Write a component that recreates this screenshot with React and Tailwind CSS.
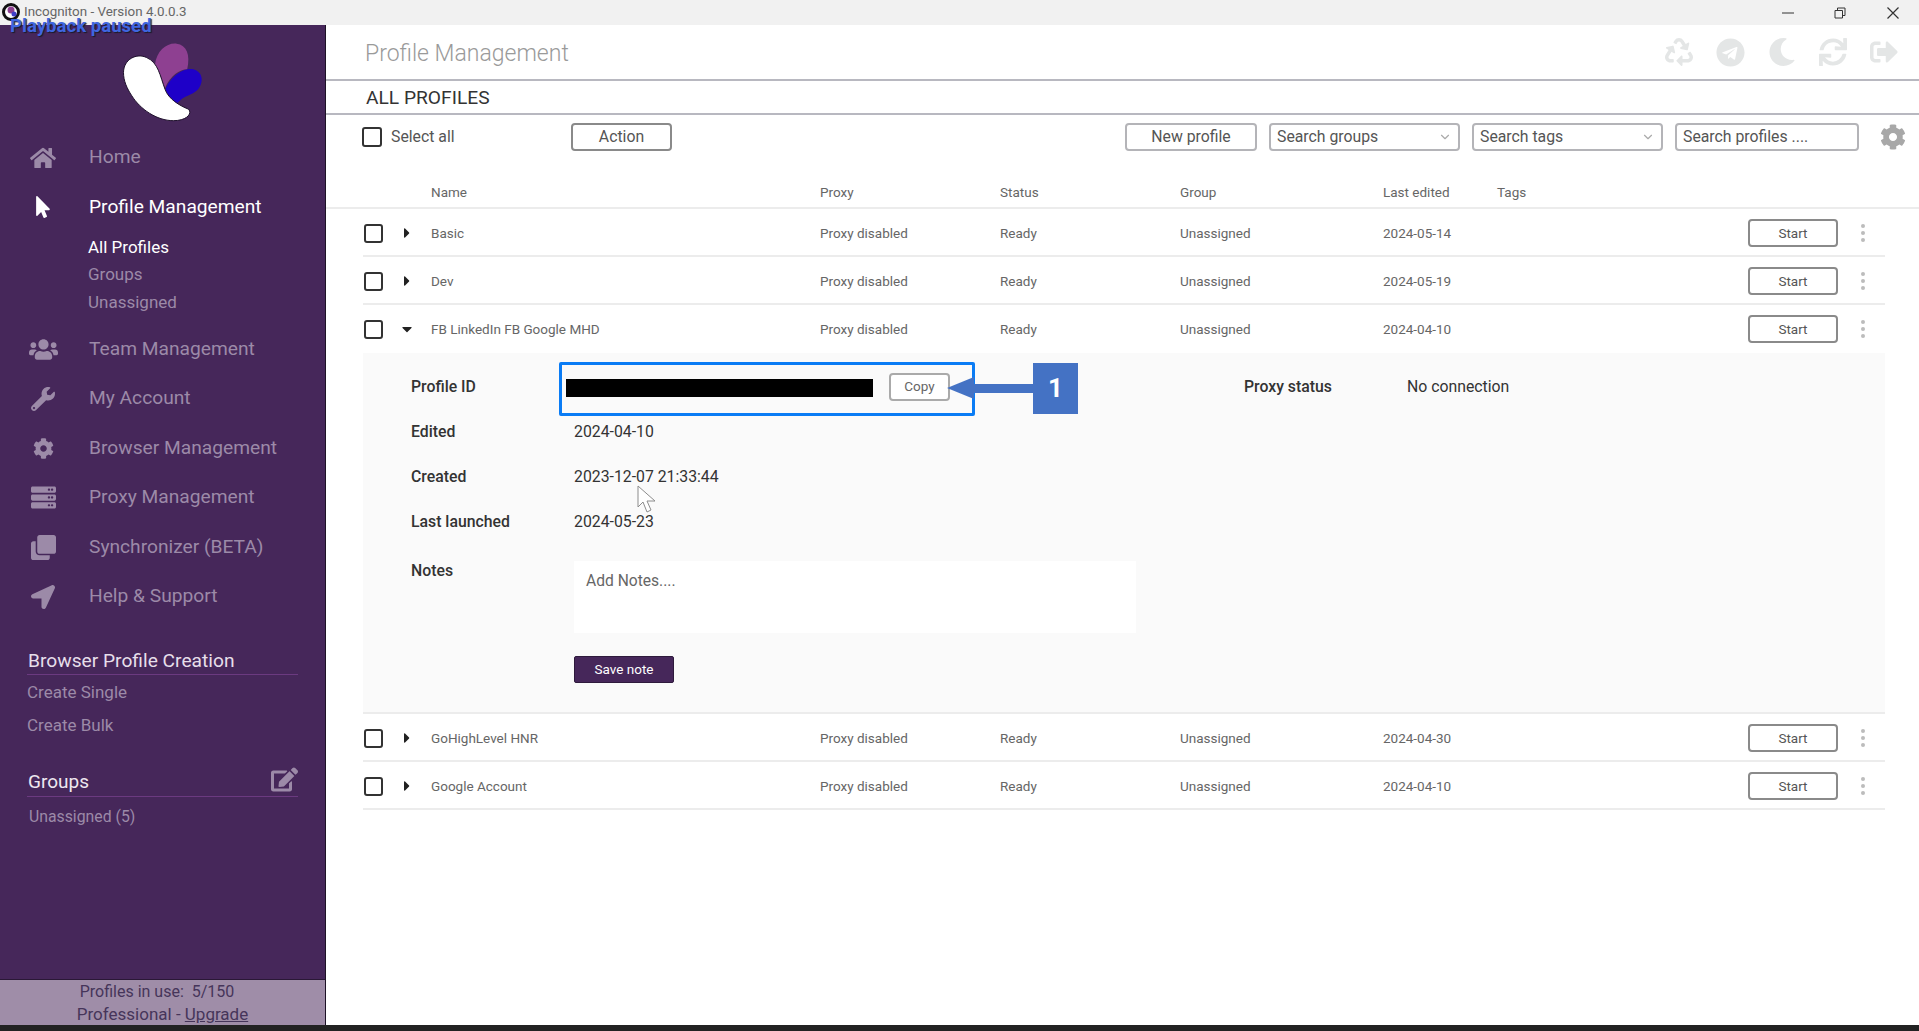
import { ChevronDown } from "lucide-react";
import {
  FaCaretDown,
  FaCaretRight,
  FaClone,
  FaCog,
  FaEdit,
  FaHome,
  FaLocationArrow,
  FaMoon,
  FaMousePointer,
  FaRecycle,
  FaServer,
  FaSignOutAlt,
  FaSync,
  FaTelegram,
  FaUsers,
  FaWrench,
} from "react-icons/fa";

const ROW_GRID = "grid grid-cols-[68px_389px_180px_180px_203px_114px_251px_90px_1fr] items-center";

const NAV_TOP = [{ label: "Home", icon: FaHome, size: 26 }];
const NAV_BOTTOM = [
  { label: "Team Management", icon: FaUsers, size: 29 },
  { label: "My Account", icon: FaWrench, size: 24 },
  { label: "Browser Management", icon: FaCog, size: 21 },
  { label: "Proxy Management", icon: FaServer, size: 25 },
  { label: "Synchronizer (BETA)", icon: FaClone, size: 25 },
  { label: "Help & Support", icon: FaLocationArrow, size: 24 },
];

const PROFILES_TOP = [
  { name: "Basic", date: "2024-05-14" },
  { name: "Dev", date: "2024-05-19" },
  { name: "FB LinkedIn FB Google MHD", date: "2024-04-10", open: true },
];
const PROFILES_BOTTOM = [
  { name: "GoHighLevel HNR", date: "2024-04-30" },
  { name: "Google Account", date: "2024-04-10" },
];

function Logo() {
  return (
    <svg viewBox="360 120 255 250" className="w-[85px] h-[83px]">
      <path
        d="M465 190C470 150 500 125 530 128C560 132 572 160 562 205C540 205 510 225 495 262C485 235 478 210 465 190Z"
        fill="#8e4091"
      />
      <path
        d="M495 270C505 235 545 200 580 205C610 212 612 245 595 265C575 285 550 285 540 300L525 312C510 300 498 290 495 270Z"
        fill="#1e00c8"
      />
      <path
        d="M370 215C370 175 410 155 440 170C475 185 480 225 495 265C505 295 540 315 565 325C578 335 565 360 520 360C470 360 420 325 395 285C380 262 370 240 370 215Z"
        fill="#ffffff"
        stroke="#1d0f2a"
        strokeWidth="3"
      />
    </svg>
  );
}

function NavItem({ item, active }) {
  const Icon = item.icon;
  return (
    <div className={`h-[49.5px] flex items-center text-[19.2px] ${active ? "text-white" : "text-[#9c8aa8]"}`}>
      <div className="w-[89px] flex justify-center pr-[3px] shrink-0">
        <Icon size={item.size} />
      </div>
      {item.label}
    </div>
  );
}

function Sidebar() {
  return (
    <aside className="w-[326px] shrink-0 bg-[#46275a] border-r border-[#1d1226] flex flex-col">
      <div className="h-[108px] flex justify-center items-start pt-[16px]">
        <Logo />
      </div>
      {NAV_TOP.map((item) => (
        <NavItem key={item.label} item={item} />
      ))}
      <NavItem item={{ label: "Profile Management", icon: FaMousePointer, size: 22 }} active />
      <div className="pl-[88px] pt-[1.5px] text-[17px] text-[#9c8aa8] mb-[8.5px]">
        <div className="h-[27.5px] flex items-center text-white">All Profiles</div>
        <div className="h-[27.5px] flex items-center">Groups</div>
        <div className="h-[27.5px] flex items-center">Unassigned</div>
      </div>
      {NAV_BOTTOM.map((item) => (
        <NavItem key={item.label} item={item} />
      ))}
      <div className="mt-[26px] ml-[27px] mr-[27px] h-[27px] border-b border-[#6b3a80] text-[19.2px] leading-[26px] text-[#e6dfea] pl-[1px]">
        Browser Profile Creation
      </div>
      <div className="pl-[27px] pt-[2px] text-[17px] text-[#9c8aa8]">
        <div className="h-[33px] flex items-center">Create Single</div>
        <div className="h-[33px] flex items-center">Create Bulk</div>
      </div>
      <div className="mt-[26px] mx-[27px] h-[28px] border-b border-[#6b3a80] flex justify-between items-start text-[19px] leading-[26px] text-[#eee8f0] pl-[1px]">
        Groups
        <FaEdit size={27} className="text-[#9c8aa8] -mt-[3px]" />
      </div>
      <div className="pl-[29px] pt-[9px] text-[15.8px] leading-[22px] text-[#9c8aa8]">Unassigned (5)</div>
      <div className="mt-auto h-[46px] bg-[#9f8da8] border-t border-[#2a1836] leading-[22px] text-[#46355a] flex flex-col items-center justify-center whitespace-pre">
        <div className="text-[16px] pr-[11px]">Profiles in use:  5/150</div>
        <div className="text-[17px]">
          Professional - <span className="underline">Upgrade</span>
        </div>
      </div>
    </aside>
  );
}

function Checkbox() {
  return <div className="w-[19px] h-[19px] rounded-[3px] border-2 border-[#333] bg-white" />;
}

function Dots() {
  return (
    <div className="flex flex-col items-center gap-[3px]">
      <div className="w-1 h-1 rounded-full bg-[#bcbcbc]" />
      <div className="w-1 h-1 rounded-full bg-[#bcbcbc]" />
      <div className="w-1 h-1 rounded-full bg-[#bcbcbc]" />
    </div>
  );
}

function ProfileRow({ profile }) {
  const Caret = profile.open ? FaCaretDown : FaCaretRight;
  return (
    <div className={`${ROW_GRID} h-[48px] pt-[2px] text-[13.5px] text-[#666] border-b-2 ${profile.open ? "border-transparent" : "border-[#ececec]"}`}>
      <div className="flex items-center">
        <div className="ml-[1px]">
          <Checkbox />
        </div>
        <Caret size={16} className="text-[#222] ml-[16px]" />
      </div>
      <div>{profile.name}</div>
      <div>Proxy disabled</div>
      <div>Ready</div>
      <div>Unassigned</div>
      <div>{profile.date}</div>
      <div />
      <div className="h-[28px] rounded-[4px] border-2 border-[#8a8a8a] flex items-center justify-center text-[#555]">Start</div>
      <div className="pl-[23px] w-fit">
        <Dots />
      </div>
    </div>
  );
}

function DetailPanel() {
  return (
    <div className="h-[361px] bg-[#fafafa] border-b-2 border-[#ececec] pl-[48px] pt-[11px] text-[15.8px] text-[#333] relative">
      <div className="grid grid-cols-[163px_670px_163px_1fr] h-[45px] items-center">
        <div className="font-medium">Profile ID</div>
        <div className="flex items-center">
          <div className="w-[307px] h-[18px] bg-black -ml-2 mt-[2px]" />
          <div className="ml-[16px] w-[61px] h-[28px] rounded-[4px] border-2 border-[#aaa] bg-white flex items-center justify-center text-[13.5px] text-[#666]">
            Copy
          </div>
        </div>
        <div className="font-medium">Proxy status</div>
        <div>No connection</div>
      </div>
      {[
        ["Edited", "2024-04-10"],
        ["Created", "2023-12-07 21:33:44"],
        ["Last launched", "2024-05-23"],
      ].map(([label, value]) => (
        <div key={label} className="grid grid-cols-[163px_1fr] h-[45px] items-center">
          <div className="font-medium">{label}</div>
          <div>{value}</div>
        </div>
      ))}
      <div className="grid grid-cols-[163px_562px] mt-[17px]">
        <div className="font-medium leading-[20px]">Notes</div>
        <div className="h-[72px] bg-white px-[12px] pt-[10px] leading-[20px] text-[15.6px] text-[#666]">Add Notes....</div>
        <div />
        <div className="mt-[23px] w-[100px] h-[27px] rounded-[2px] bg-[#46275a] border border-[#2e1a3c] text-white text-[13.5px] flex items-center justify-center">
          Save note
        </div>
      </div>

      {/* annotation drawn on top of the video frame */}
      <div className="absolute left-[196px] top-[9px] w-[416px] h-[54px] border-[3px] border-[#0a7cf5] rounded-[2px]" />
      <div className="absolute left-[584px] top-[24px] flex items-center">
        <div className="w-0 h-0 border-y-[11.5px] border-y-transparent border-r-[27px] border-r-[#4472c4]" />
        <div className="w-[59px] h-[9px] bg-[#4472c4]" />
      </div>
      <div className="absolute left-[670px] top-[10px] w-[45px] h-[51px] bg-[#4472c4] text-white text-[26px] font-bold flex items-center justify-center">
        1
      </div>
      <svg viewBox="0 0 20 28" className="absolute left-[274px] top-[132px] w-[20px] h-[28px]">
        <path d="M1 1V22L6 17L10 27L14 25L10 16H18Z" fill="#ffffff" stroke="#8c8c8c" strokeWidth="1" />
      </svg>
    </div>
  );
}

function Toolbar() {
  const box = "h-[28px] rounded-[4px] border-2 border-[#b4b4b8] flex items-center text-[15.8px] text-[#555]";
  return (
    <div className="h-[58px] flex items-start pt-[8px] pl-[36px] pr-[13px]">
      <div className="mt-[4px] w-[20px] h-[20px] rounded-[3px] border-2 border-[#333]" />
      <div className="ml-[9px] w-[180px] text-[15.8px] leading-[28px] text-[#555]">Select all</div>
      <div className="w-[101px] h-[28px] rounded-[4px] border-2 border-[#8a8a8a] flex items-center justify-center text-[15.8px] text-[#555]">
        Action
      </div>
      <div className="ml-auto flex items-center gap-[12px]">
        <div className={`${box} w-[132px] justify-center`}>New profile</div>
        <div className={`${box} w-[191px] justify-between px-[6px]`}>
          Search groups
          <ChevronDown size={14} className="text-[#aaa]" />
        </div>
        <div className={`${box} w-[191px] justify-between px-[6px]`}>
          Search tags
          <ChevronDown size={14} className="text-[#aaa]" />
        </div>
        <div className={`${box} w-[184px] px-[6px]`}>Search profiles ....</div>
        <FaCog size={26} className="text-[#a8a8a8] ml-[9px]" />
      </div>
    </div>
  );
}

function Main() {
  return (
    <main className="flex-1 min-w-0 bg-white flex flex-col">
      <div className="h-[56px] border-b-2 border-[#b8b8c0] flex items-center pl-[39px] pr-[21px]">
        <div className="pt-[4px] text-[23px] font-light text-[#9a9a9a]">Profile Management</div>
        <div className="ml-auto flex items-center gap-[23px] text-[#e4e6e6]">
          <FaRecycle size={28} />
          <FaTelegram size={29} />
          <FaMoon size={28} />
          <FaSync size={28} />
          <FaSignOutAlt size={28} />
        </div>
      </div>
      <div className="h-[34px] pt-[3px] border-b-2 border-[#b8b8c0] flex items-center pl-[40px] text-[19.2px] text-[#333]">ALL PROFILES</div>
      <Toolbar />
      <div className={`${ROW_GRID} h-[36px] pt-[4px] pl-[37px] pr-[34px] border-b-2 border-[#ececec] text-[13.5px] text-[#666]`}>
        <div />
        <div>Name</div>
        <div>Proxy</div>
        <div>Status</div>
        <div>Group</div>
        <div>Last edited</div>
        <div>Tags</div>
      </div>
      <div className="ml-[37px] mr-[34px]">
        {PROFILES_TOP.map((p) => (
          <ProfileRow key={p.name} profile={p} />
        ))}
        <DetailPanel />
        {PROFILES_BOTTOM.map((p) => (
          <ProfileRow key={p.name} profile={p} />
        ))}
      </div>
    </main>
  );
}

export default function App() {
  return (
    <div className="relative h-[1031px] flex flex-col overflow-hidden font-['Roboto',sans-serif]">
      <div className="h-[25px] bg-[#f1f1f1] flex items-center pl-[24px] text-[13.4px] text-[#666] shrink-0">
        Incogniton - Version 4.0.0.3
        <div className="ml-auto flex items-center text-[#333]">
          <svg viewBox="0 0 12 12" className="w-[12px] h-[12px] mr-[40px]">
            <path d="M0 6H12" stroke="currentColor" strokeWidth="1" />
          </svg>
          <svg viewBox="0 0 12 12" className="w-[12px] h-[12px] mr-[41px]">
            <path d="M1 3.5H8.5V11H1ZM3.5 3.5V1H11V8.5H8.5" stroke="currentColor" strokeWidth="1" fill="none" />
          </svg>
          <svg viewBox="0 0 12 12" className="w-[12px] h-[12px] mr-[20px]">
            <path d="M0.5 0.5L11.5 11.5M11.5 0.5L0.5 11.5" stroke="currentColor" strokeWidth="1.2" />
          </svg>
        </div>
      </div>
      <div className="flex-1 min-h-0 flex">
        <Sidebar />
        <Main />
      </div>
      <div className="h-[6px] bg-[#222] shrink-0" />

      {/* video player overlay */}
      <svg viewBox="0 0 18 18" className="absolute left-[2px] top-[3px] w-[18px] h-[18px]">
        <circle cx="9" cy="9" r="7.5" fill="#ffffff" stroke="#111111" strokeWidth="3" />
        <circle cx="9" cy="7" r="3.5" fill="#8e4091" />
        <circle cx="12" cy="11" r="2.5" fill="#3f3fc8" />
      </svg>
      <div className="absolute left-[10px] top-[16px] text-[18.6px] leading-[20px] font-bold text-[#3f66e0] [text-shadow:1px_1px_1px_#1a1a2a]">
        Playback paused
      </div>
    </div>
  );
}
